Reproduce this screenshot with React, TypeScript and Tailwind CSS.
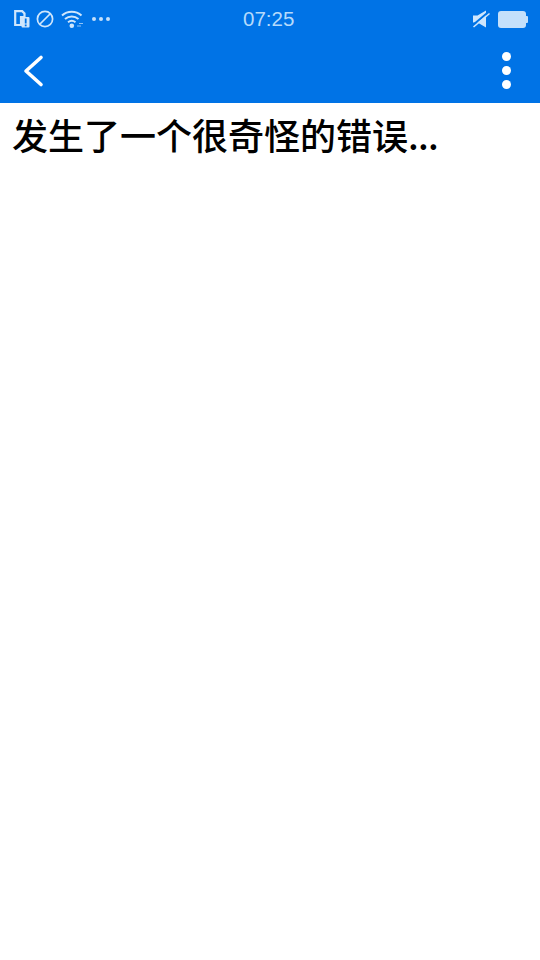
const StatusLeft = () => (
  <div className="flex items-center">
    {/* sim card with alert */}
    <svg width="16" height="18" viewBox="0 0 16 18" className="ml-[14px]">
      <path d="M1.2 1.2h7l2.3 2.3V7H7v8H1.2z" fill="none" stroke="#cfe6fc" strokeWidth="2.2" />
      <rect x="7.5" y="7" width="8" height="10.5" rx="1" fill="#cfe6fc" />
      <rect x="10.8" y="8.5" width="1.8" height="5" fill="#0073e6" />
      <rect x="10.8" y="14.5" width="1.8" height="1.8" fill="#0073e6" />
    </svg>
    {/* blocked circle */}
    <svg width="18" height="18" viewBox="0 0 18 18" className="ml-[6px]">
      <circle cx="9" cy="9" r="7.6" fill="none" stroke="#cfe6fc" strokeWidth="1.7" />
      <path d="M4 14 14 4" stroke="#cfe6fc" strokeWidth="1.7" />
    </svg>
    {/* wifi */}
    <svg width="23" height="20" viewBox="0 0 23 20" className="ml-[7px]">
      <path d="M1 6.5C6.5 1.5 15 1.5 20.5 6.5" fill="none" stroke="#cfe6fc" strokeWidth="2" />
      <path d="M4 10C8 6.6 13.5 6.6 17.5 10" fill="none" stroke="#cfe6fc" strokeWidth="2" />
      <path d="M7 13.2C9.5 11.4 12 11.4 14.5 13.2" fill="none" stroke="#cfe6fc" strokeWidth="2" />
      <circle cx="10.8" cy="16.8" r="2.3" fill="#cfe6fc" />
      <path d="M16 17h4M18 14.5h4" stroke="#cfe6fc" strokeWidth="1" opacity="0.7" />
    </svg>
    <div className="ml-[8px] flex gap-[3px]">
      <span className="size-[4px] rounded-full bg-[#c4e0fb]" />
      <span className="size-[4px] rounded-full bg-[#c4e0fb]" />
      <span className="size-[4px] rounded-full bg-[#c4e0fb]" />
    </div>
  </div>
);

const StatusRight = () => (
  <div className="flex items-center">
    {/* muted speaker */}
    <svg width="18" height="18" viewBox="0 0 18 18">
      <path d="M1 5.5h4.5L14 0.5v17L5.5 12.5H1z" fill="#cfe6fc" />
      <path d="M0.5 15.5 17 1.5" stroke="#0073e6" strokeWidth="2" />
      <path d="M1.5 17 17.5 3.5" stroke="#cfe6fc" strokeWidth="1.6" />
    </svg>
    {/* battery */}
    <div className="ml-[8px] flex items-center">
      <div className="h-[17px] w-[28px] rounded-[3px] bg-[#c4e0fb]" />
      <div className="h-[7px] w-[2px] rounded-r-[1px] bg-[#c4e0fb]" />
    </div>
  </div>
);

export default function App() {
  return (
    <div className="h-[960px] w-[540px] overflow-hidden bg-white font-['Noto_Sans_CJK_SC','Liberation_Sans',sans-serif]">
      <div className="bg-[#0073e6]">
        <div className="relative flex h-[38px] items-center justify-between pr-[12px]">
          <StatusLeft />
          <span className="absolute left-[243px] top-[7px] text-[20.5px] leading-[24px] text-[#b5dafb] font-['Liberation_Sans',sans-serif]">
            07:25
          </span>
          <StatusRight />
        </div>
        <div className="flex h-[65px] items-center justify-between pl-[22px] pr-[29px]">
          <svg width="22" height="36" viewBox="0 0 22 36">
            <path d="M19 4.5 4 18l15 13.5" fill="none" stroke="white" strokeWidth="3.6" strokeLinecap="round" strokeLinejoin="round" />
          </svg>
          <div className="flex flex-col gap-[5px]">
            <span className="size-[9px] rounded-full bg-white" />
            <span className="size-[9px] rounded-full bg-white" />
            <span className="size-[9px] rounded-full bg-white" />
          </div>
        </div>
      </div>
      <h1 className="pl-[12px] pt-[5px] text-[36px] leading-[52px] font-medium text-black">
        发生了一个很奇怪的错误<span className="tracking-[-0.7px]">...</span>
      </h1>
    </div>
  );
}
